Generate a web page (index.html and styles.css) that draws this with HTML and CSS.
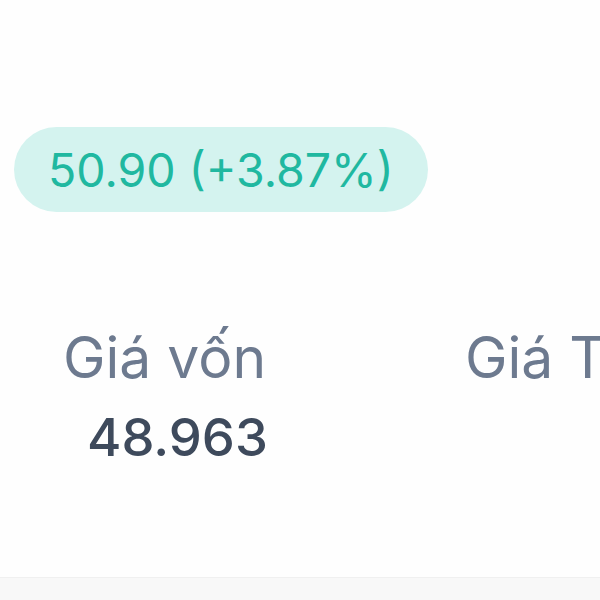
FILE: index.html
```html
<!DOCTYPE html>
<html lang="vi">
<head>
<meta charset="utf-8">
<link rel="stylesheet" href="styles.css">
</head>
<body>
<main class="screen">
  <section class="price-area">
    <div class="price-pill">50.90 (+3.87%)</div>
  </section>
  <section class="stats">
    <div class="stat">
      <div class="stat-label">Giá vốn</div>
      <div class="stat-value">48.963</div>
    </div>
    <div class="stat">
      <div class="stat-label">Giá TT</div>
      <div class="stat-value"></div>
    </div>
  </section>
  <footer class="bottom-band"></footer>
</main>
</body>
</html>
```
FILE: styles.css
```css
* { box-sizing: border-box; }
html, body { margin: 0; padding: 0; background: #ffffff; }
body { font-family: "Inter", "Liberation Sans", sans-serif; overflow: hidden; }
.screen { width: 600px; height: 600px; display: flex; flex-direction: column; background: #fefefe; overflow: hidden; }
.price-area { padding: 127px 0 0 14px; height: 212px; flex: none; }
.price-pill {
  display: inline-flex; align-items: center;
  height: 85px; padding: 0 34px;
  border-radius: 43px;
  background: #d4f3ef;
  color: #20b8a0;
  font-size: 46.5px;
  letter-spacing: 0px;
}
.stats { display: flex; padding-top: 115px; height: 365px; flex: none; overflow: hidden; }
.stat { width: 402px; flex: none; display: flex; flex-direction: column; }
.stat-label { font-size: 57px; color: #6d7a8f; padding-left: 63px; line-height: 62px; white-space: nowrap; }
.stat-value { font-size: 52.5px; color: #3e4a5c; padding-left: 87px; line-height: 62px; margin-top: 17px; font-weight: 500; }
.bottom-band { flex: 1; background: #f8f8f8; border-top: 1px solid #f0f0f0; }
```
